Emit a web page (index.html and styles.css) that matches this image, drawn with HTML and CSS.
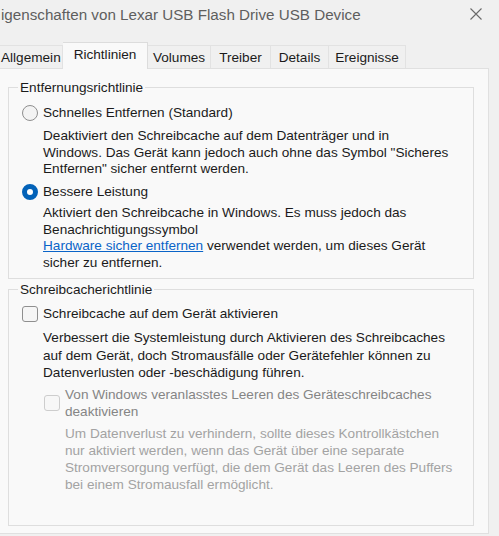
FILE: index.html
```html
<!DOCTYPE html>
<html lang="de">
<head>
<meta charset="utf-8">
<title>Eigenschaften</title>
<link rel="stylesheet" href="styles.css">
</head>
<body>
<div class="window">
  <div class="titlebar">
    <span class="title">igenschaften von Lexar USB Flash Drive USB Device</span>
    <svg class="close" width="14" height="14" viewBox="0 0 14 14"><path d="M1.5 1.5 L12.5 12.5 M12.5 1.5 L1.5 12.5" stroke="#6a6a6a" stroke-width="1.1" fill="none"/></svg>
  </div>
  <div class="tabs">
    <div class="tab t-allg">Allgemein</div>
    <div class="tab tab-active t-richt">Richtlinien</div>
    <div class="tab t-vol">Volumes</div>
    <div class="tab t-treib">Treiber</div>
    <div class="tab t-det">Details</div>
    <div class="tab t-ereig">Ereignisse</div>
  </div>
  <div class="panel">
    <fieldset class="group group-removal">
      <legend>Entfernungsrichtlinie</legend>
      <div class="option">
        <span class="radio"></span>
        <span class="label">Schnelles Entfernen (Standard)</span>
      </div>
      <p class="desc">Deaktiviert den Schreibcache auf dem Datenträger und in<br>Windows. Das Gerät kann jedoch auch ohne das Symbol "Sicheres<br>Entfernen" sicher entfernt werden.</p>
      <div class="option option-second">
        <span class="radio radio-on"></span>
        <span class="label">Bessere Leistung</span>
      </div>
      <p class="desc desc-second">Aktiviert den Schreibcache in Windows. Es muss jedoch das<br>Benachrichtigungssymbol<br><a class="link" href="#">Hardware sicher entfernen</a> verwendet werden, um dieses Gerät<br>sicher zu entfernen.</p>
    </fieldset>
    <fieldset class="group group-cache">
      <legend>Schreibcacherichtlinie</legend>
      <div class="option">
        <span class="check"></span>
        <span class="label">Schreibcache auf dem Gerät aktivieren</span>
      </div>
      <p class="desc desc-cache">Verbessert die Systemleistung durch Aktivieren des Schreibcaches<br>auf dem Gerät, doch Stromausfälle oder Gerätefehler können zu<br>Datenverlusten oder -beschädigung führen.</p>
      <div class="option option-sub">
        <span class="check check-disabled"></span>
        <span class="label label-disabled">Von Windows veranlasstes Leeren des Geräteschreibcaches<br>deaktivieren</span>
      </div>
      <p class="desc desc-sub">Um Datenverlust zu verhindern, sollte dieses Kontrollkästchen<br>nur aktiviert werden, wenn das Gerät über eine separate<br>Stromversorgung verfügt, die dem Gerät das Leeren des Puffers<br>bei einem Stromausfall ermöglicht.</p>
    </fieldset>
  </div>
</div>
</body>
</html>
```

FILE: styles.css
```css
html, body {
  margin: 0;
  padding: 0;
}
body {
  width: 499px;
  height: 536px;
  overflow: hidden;
  background: #f0f0f0;
  font-family: "Liberation Sans", Arial, sans-serif;
  font-size: 13.6px;
  color: #1b1b1b;
}
.window {
  display: flex;
  flex-direction: column;
  height: 536px;
}
.titlebar {
  height: 28px;
  display: flex;
  align-items: center;
  justify-content: space-between;
  padding: 0 16px 0 1px;
  flex: none;
}
.title {
  font-size: 15.2px;
  color: #5e5e5e;
  white-space: nowrap;
}
.close {
  display: block;
}
.tabs {
  display: flex;
  align-items: flex-end;
  height: 26px;
  margin-top: 14px;
  flex: none;
  position: relative;
  z-index: 1;
}
.tab {
  height: 23px;
  line-height: 24px;
  box-sizing: border-box;
  text-align: center;
  border: 1px solid #e2e2e2;
  border-bottom: none;
  border-left: none;
  background: #f0f0f0;
  color: #1b1b1b;
  white-space: nowrap;
}
.tab-active {
  line-height: 24px;
  background: #f9f9f9;
  border-color: #dcdcdc;
  margin-bottom: -1px;
  height: 27px;
}
.t-allg { width: 63px; text-align: left; padding-left: 1px; }
.t-richt { width: 85px; }
.t-vol { width: 63px; }
.t-treib { width: 60px; }
.t-det { width: 58px; }
.t-ereig { width: 77px; }
.panel {
  width: 489px;
  height: 466px;
  box-sizing: border-box;
  background: #f9f9f9;
  border: 1px solid #e0e0e0;
  border-left: none;
  padding-top: 10px;
  display: flex;
  flex-direction: column;
}
.group {
  margin: 0 0 0 8px;
  width: 466px;
  box-sizing: border-box;
  border: 1px solid #dedede;
  padding: 7px 12px 7px 12px;
  min-inline-size: 0;
}
.group legend {
  padding: 0 2px;
  margin-left: -3px;
  line-height: 17px;
  color: #1b1b1b;
}
.group-cache {
  margin-top: 2px;
  flex: 1;
  margin-bottom: 7px;
  padding-top: 6px;
}
.option {
  display: flex;
  align-items: center;
  min-height: 20px;
  gap: 5px;
  padding-left: 1px;
}
.option-second {
  margin-top: 4px;
}
.label {
  line-height: 17.5px;
  white-space: nowrap;
}
.radio {
  width: 16px;
  height: 16px;
  box-sizing: border-box;
  border-radius: 50%;
  border: 1px solid #8f8f8f;
  background: #f3f3f3;
  flex: none;
}
.radio-on {
  border: 5px solid #0362b8;
  background: #ffffff;
}
.check {
  width: 16px;
  height: 16px;
  box-sizing: border-box;
  border-radius: 3px;
  border: 1px solid #8f8f8f;
  background: #f6f6f6;
  flex: none;
}
.check-disabled {
  border-color: #cdcdcd;
  background: #f7f7f7;
}
.desc {
  margin: 5px 0 0 22px;
  line-height: 16.5px;
  white-space: nowrap;
}
.desc-second {
  margin-top: 3.5px;
}
.desc-cache {
  line-height: 17.5px;
}
.option-sub {
  margin-top: 4px;
  padding-left: 23px;
}
.label-disabled {
  color: #858585;
}
.desc-sub {
  margin: 4px 0 0 44px;
  line-height: 17px;
  color: #a3a3a3;
}
.link {
  color: #0a64c8;
  text-decoration: underline;
}
```
